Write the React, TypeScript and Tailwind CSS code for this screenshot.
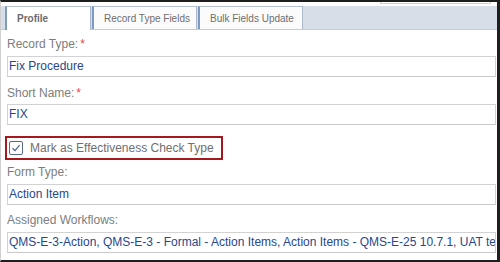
import React from "react";

const font = { fontFamily: '"Liberation Sans", Arial, sans-serif' };

function Label({ text, required }: { text: string; required?: boolean }) {
  return (
    <div className="h-[16px] leading-[16px] text-[12px] text-[#7d7d7d] ml-[6px]">
      {text}
      {required && <span className="text-[#e0474c] ml-[2px]">*</span>}
    </div>
  );
}

function Field({ value }: { value: string }) {
  return (
    <div className="ml-[6px] mr-[1px] h-[21px] border border-[#d2d2d2] border-b-[#c8c8c8] bg-white pl-[1px] text-[12px] leading-[19px] text-[#28478a] whitespace-nowrap overflow-hidden">
      {value}
    </div>
  );
}

function Tab({ label, active, w }: { label: string; active?: boolean; w: string }) {
  return (
    <div
      className={
        "h-[23px] flex items-center pl-[10px] text-[10px] border-t border-r border-l-2 border-t-[#b4c0d0] border-r-[#aab8ca] border-l-[#7e9ac2] " +
        (active
          ? "bg-white font-bold text-[#6b6b6b] -mb-px h-[24px] " + w
          : "bg-[#fbfbfc] text-[#6e6e6e] " + w)
      }
    >
      {label}
    </div>
  );
}

export default function App() {
  return (
    <div
      style={font}
      className="w-[500px] h-[262px] bg-white border-t-2 border-r-[3px] border-b-2 border-l border-[#1e1e1e] border-l-[#cfcfcf] flex flex-col overflow-hidden"
    >
      <div className="h-[4px] flex justify-end pr-[6px]">
        <div className="w-[111px] h-[2px] border border-t-0 border-[#cfcfcf]" />
      </div>
      <div className="h-[24px] bg-[#d7dee8] border-b border-[#c3cbd6] flex items-end pl-[4px] gap-[1px]">
        <Tab label="Profile" active w="w-[86px]" />
        <Tab label="Record Type Fields" w="w-[105px]" />
        <Tab label="Bulk Fields Update" w="w-[105px]" />
      </div>
      <div className="flex flex-col">
        <div className="mt-[6px]">
          <Label text="Record Type:" required />
        </div>
        <div className="mt-[4px]">
          <Field value="Fix Procedure" />
        </div>
        <div className="mt-[8px]">
          <Label text="Short Name:" required />
        </div>
        <div className="mt-[3px]">
          <Field value="FIX" />
        </div>
        <div className="mt-[11px] ml-[4px] w-[218px] h-[24px] border-2 border-[#a3191c] flex items-center pl-[2px]">
          <div className="w-[14px] h-[14px] border border-[#596a8f] rounded-[2px] bg-white flex items-center justify-center">
            <svg width="10" height="10" viewBox="0 0 10 10">
              <path d="M1.5 5.2 L4 7.6 L8.6 2.2" fill="none" stroke="#4b5f8e" strokeWidth="1.2" />
            </svg>
          </div>
          <span className="ml-[7px] text-[12px] text-[#6f6f6f] leading-[16px]">
            Mark as Effectiveness Check Type
          </span>
        </div>
        <div className="mt-[4px]">
          <Label text="Form Type:" />
        </div>
        <div className="mt-[4px]">
          <Field value="Action Item" />
        </div>
        <div className="mt-[7px]">
          <Label text="Assigned Workflows:" />
        </div>
        <div className="mt-[4px]">
          <Field value="QMS-E-3-Action, QMS-E-3 - Formal - Action Items, Action Items - QMS-E-25 10.7.1, UAT testing workflow" />
        </div>
      </div>
    </div>
  );
}
